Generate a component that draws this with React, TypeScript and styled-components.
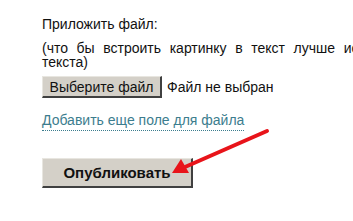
import styled, { createGlobalStyle } from "styled-components";

const Global = createGlobalStyle`
    html, body {
        margin: 0;
        padding: 0;
        background: #ffffff;
        overflow: hidden;
    }
    body {
        font-family: "Liberation Sans", Arial, sans-serif;
        color: #111111;
    }
`;

const Page = styled.div`
    position: relative;
    width: 353px;
    height: 221px;
    overflow: hidden;
`;

const Form = styled.div`
    display: flex;
    flex-direction: column;
    align-items: flex-start;
    padding: 17px 0 0 42px;
    width: 525px;
    font-size: 14px;
    line-height: 14px;
`;

const Label = styled.div`
    margin-bottom: 10px;
`;

const Hint = styled.div`
    width: 100%;
    margin-bottom: 7px;
`;

const HintLine = styled.div`
    text-align: justify;
    text-align-last: justify;
`;

const FileRow = styled.div`
    display: flex;
    align-items: center;
    gap: 5px;
    margin-bottom: 15px;
`;

const GreyButton = styled.button<{ $bold?: boolean }>`
    font-family: "Liberation Sans", Arial, sans-serif;
    font-size: ${(p) => (p.$bold ? "15px" : "14px")};
    font-weight: ${(p) => (p.$bold ? 700 : 400)};
    color: #111111;
    background: #d4d0c8;
    border: 1px solid;
    border-color: #e8e6e0 #404040 #404040 #e8e6e0;
    border-right-width: 2px;
    border-bottom-width: 2px;
    padding: 0;
    cursor: pointer;
`;

const ChooseButton = styled(GreyButton)`
    width: 120px;
    height: 22px;
`;

const PublishButton = styled(GreyButton)`
    width: 151px;
    height: 30px;
    margin-top: 27px;
`;

const NoFile = styled.span``;

const AddLink = styled.a`
    color: #3c7d8e;
    text-decoration: none;
    border-bottom: 1px dotted #3c7d8e;
    padding-bottom: 3px;
    font-size: 14px;
`;

const Arrow = styled.svg`
    position: absolute;
    left: 0;
    top: 0;
    pointer-events: none;
`;

export default function App() {
    return (
        <Page>
            <Global />
            <Form>
                <Label>Приложить файл:</Label>
                <Hint>
                    <HintLine>(что бы встроить картинку в текст лучше используйте кнопку в редакторе</HintLine>
                    <div>текста)</div>
                </Hint>
                <FileRow>
                    <ChooseButton>Выберите файл</ChooseButton>
                    <NoFile>Файл не выбран</NoFile>
                </FileRow>
                <AddLink href="#">Добавить еще поле для файла</AddLink>
                <PublishButton $bold>Опубликовать</PublishButton>
            </Form>
            <Arrow width="353" height="221" viewBox="0 0 353 221">
                <line x1="267" y1="131" x2="185" y2="167" stroke="#e8141a" strokeWidth="4" strokeLinecap="round" />
                <polygon points="172,173 181,159 189,173" fill="#e8141a" />
            </Arrow>
        </Page>
    );
}
